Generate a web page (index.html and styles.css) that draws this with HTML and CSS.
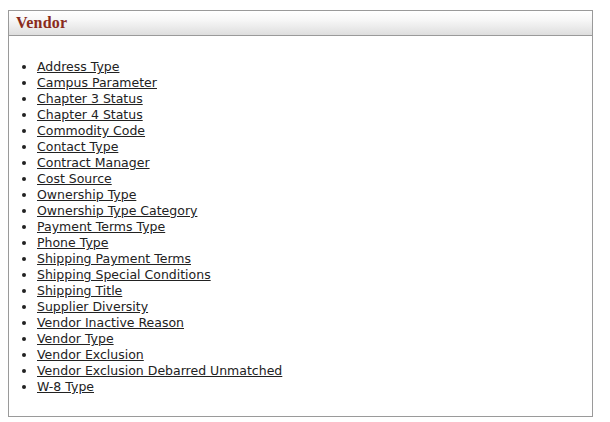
FILE: index.html
```html
<!DOCTYPE html>
<html>
<head>
<meta charset="utf-8">
<link rel="stylesheet" href="styles.css">
</head>
<body>
<div class="panel">
  <div class="panel-head"><h2 class="panel-title">Vendor</h2></div>
  <div class="panel-body">
    <ul class="links">
      <li><a href="#">Address Type</a></li>
      <li><a href="#">Campus Parameter</a></li>
      <li><a href="#">Chapter 3 Status</a></li>
      <li><a href="#">Chapter 4 Status</a></li>
      <li><a href="#">Commodity Code</a></li>
      <li><a href="#">Contact Type</a></li>
      <li><a href="#">Contract Manager</a></li>
      <li><a href="#">Cost Source</a></li>
      <li><a href="#">Ownership Type</a></li>
      <li><a href="#">Ownership Type Category</a></li>
      <li><a href="#">Payment Terms Type</a></li>
      <li><a href="#">Phone Type</a></li>
      <li><a href="#">Shipping Payment Terms</a></li>
      <li><a href="#">Shipping Special Conditions</a></li>
      <li><a href="#">Shipping Title</a></li>
      <li><a href="#">Supplier Diversity</a></li>
      <li><a href="#">Vendor Inactive Reason</a></li>
      <li><a href="#">Vendor Type</a></li>
      <li><a href="#">Vendor Exclusion</a></li>
      <li><a href="#">Vendor Exclusion Debarred Unmatched</a></li>
      <li><a href="#">W-8 Type</a></li>
    </ul>
  </div>
</div>
</body>
</html>
```
FILE: styles.css
```css
html, body {
  margin: 0;
  padding: 0;
  background: #fff;
}
body {
  padding: 10px 17px 0 8px;
  font-family: "DejaVu Sans", Verdana, sans-serif;
}
.panel {
  border: 1px solid #9a9a9a;
  box-sizing: border-box;
  width: 585px;
  height: 407px;
}
.panel-head {
  height: 24px;
  border-bottom: 1px solid #9a9a9a;
  background: linear-gradient(#ffffff 0%, #f6f6f6 40%, #dedede 100%);
  display: flex;
  align-items: center;
  padding-left: 7px;
}
.panel-title {
  margin: 0;
  font-family: "Liberation Serif", "Times New Roman", serif;
  font-weight: bold;
  font-size: 16px;
  color: #8a2b1b;
  letter-spacing: 0.2px;
}
.panel-body {
  padding: 23px 0 0 0;
}
.links {
  margin: 0;
  padding-left: 28px;
  list-style: disc;
  font-size: 12.5px;
  line-height: 16px;
  color: #222;
}
.links a {
  color: #222;
  text-decoration: underline;
}
```
